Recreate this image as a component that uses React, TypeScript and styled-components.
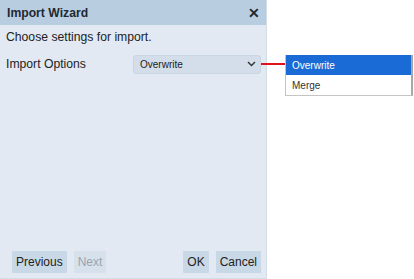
import React from "react";
import styled, { createGlobalStyle } from "styled-components";

const GlobalStyle = createGlobalStyle`
  html, body {
    margin: 0;
    padding: 0;
    background: #ffffff;
    font-family: "Liberation Sans", Arial, sans-serif;
  }
`;

const Page = styled.div`
  position: relative;
  width: 414px;
  height: 279px;
  display: flex;
`;

const Dialog = styled.section`
  width: 267px;
  height: 279px;
  box-sizing: border-box;
  display: flex;
  flex-direction: column;
  background: #e2e9f2;
  border-right: 1px solid #d3dde8;
  border-bottom: 1px solid #d3dde8;
`;

const TitleBar = styled.header`
  height: 25px;
  flex: none;
  display: flex;
  align-items: center;
  justify-content: space-between;
  padding: 0 6px 0 7px;
  background: #b9cde0;
  font-size: 12.2px;
  font-weight: bold;
  color: #1f2933;
`;

const Close = styled.span`
  font-size: 14px;
  font-weight: bold;
  color: #1f2933;
`;

const Body = styled.div`
  flex: 1;
  display: flex;
  flex-direction: column;
  padding: 4px 5px 0 6px;
  color: #222;
  font-size: 12.2px;
`;

const Intro = styled.p`
  margin: 1px 0 10px;
`;

const FieldRow = styled.div`
  display: flex;
  align-items: center;
  justify-content: space-between;
  height: 20px;
`;

const SelectBox = styled.div`
  width: 128px;
  height: 19px;
  box-sizing: border-box;
  display: flex;
  align-items: center;
  justify-content: space-between;
  padding: 0 4px 0 6px;
  background: #d3deea;
  border: 1px solid #c9d5e2;
  border-radius: 3px;
  font-size: 10px;
  color: #222;
`;

const Footer = styled.footer`
  flex: none;
  display: flex;
  align-items: center;
  padding: 0 5px 5px 12px;
  gap: 7px;
`;

const Spacer = styled.div`
  flex: 1;
`;

const Button = styled.button<{ $disabled?: boolean }>`
  height: 22px;
  padding: 0 4px;
  border: none;
  border-radius: 1px;
  background: ${(p) => (p.$disabled ? "#d7e1ec" : "#c9d8e6")};
  color: ${(p) => (p.$disabled ? "#9aa4ae" : "#222")};
  font-family: "Liberation Sans", Arial, sans-serif;
  font-size: 12px;
`;

const Connector = styled.div`
  position: absolute;
  left: 261px;
  top: 63px;
  width: 25px;
  height: 2px;
  background: #e0131c;
`;

const Menu = styled.ul`
  position: absolute;
  left: 285px;
  top: 55px;
  width: 128px;
  margin: 0;
  padding: 0;
  list-style: none;
  background: #ffffff;
  border: 1px solid #c4c4c4;
  border-top: none;
  border-right: 2px solid #a8a8a8;
  box-sizing: border-box;
  font-size: 10px;
`;

const MenuItem = styled.li<{ $active?: boolean }>`
  height: 20px;
  display: flex;
  align-items: center;
  padding-left: 6px;
  background: ${(p) => (p.$active ? "#1a6bd6" : "#ffffff")};
  color: ${(p) => (p.$active ? "#ffffff" : "#333")};
`;

const Chevron = () => (
  <svg width="9" height="6" viewBox="0 0 9 6">
    <path d="M1 1l3.5 3.5L8 1" fill="none" stroke="#333" strokeWidth="1.4" />
  </svg>
);

const options = ["Overwrite", "Merge"];

export default function App() {
  return (
    <Page>
      <GlobalStyle />
      <Dialog>
        <TitleBar>
          <span>Import Wizard</span>
          <Close>✕</Close>
        </TitleBar>
        <Body>
          <Intro>Choose settings for import.</Intro>
          <FieldRow>
            <span>Import Options</span>
            <SelectBox>
              <span>Overwrite</span>
              <Chevron />
            </SelectBox>
          </FieldRow>
        </Body>
        <Footer>
          <Button>Previous</Button>
          <Button $disabled>Next</Button>
          <Spacer />
          <Button>OK</Button>
          <Button>Cancel</Button>
        </Footer>
      </Dialog>
      <Connector />
      <Menu>
        {options.map((o, i) => (
          <MenuItem key={o} $active={i === 0}>
            {o}
          </MenuItem>
        ))}
      </Menu>
    </Page>
  );
}
